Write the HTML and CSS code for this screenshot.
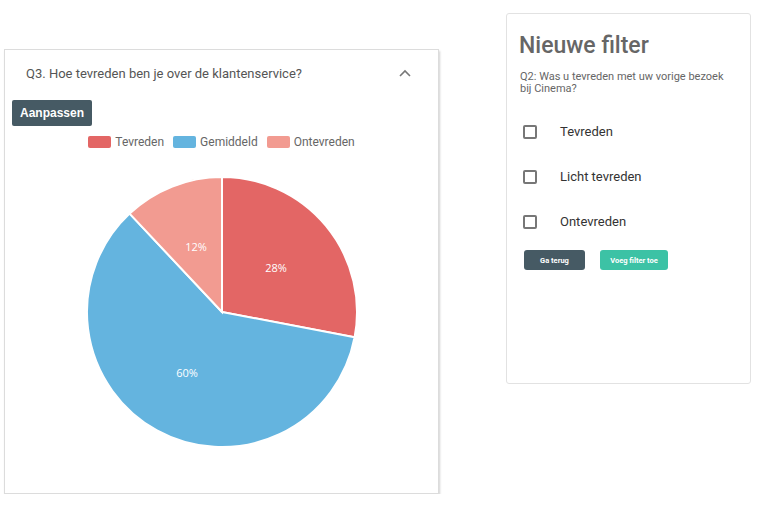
FILE: index.html
```html
<!DOCTYPE html>
<html lang="nl">
<head>
<meta charset="utf-8">
<title>Filter</title>
<link rel="stylesheet" href="styles.css">
</head>
<body>
<div class="page">
  <section class="chart-card">
    <header class="chart-head">
      <span class="chart-title">Q3. Hoe tevreden ben je over de klantenservice?</span>
      <svg class="chevron" width="12" height="8" viewBox="0 0 12 8"><path d="M1 7 L6 2 L11 7" fill="none" stroke="#777" stroke-width="1.6"/></svg>
    </header>
    <button class="btn-edit">Aanpassen</button>
    <ul class="legend">
      <li><span class="swatch sw-red"></span>Tevreden</li>
      <li><span class="swatch sw-blue"></span>Gemiddeld</li>
      <li><span class="swatch sw-pink"></span>Ontevreden</li>
    </ul>
    <div class="pie-wrap">
      <svg class="pie" width="274" height="274" viewBox="0 0 274 274">
        <path d="M137 137 L137 2 A135 135 0 0 1 269.6 162.3 Z" fill="#e36665" stroke="#fff" stroke-width="2"/>
        <path d="M137 137 L269.6 162.3 A135 135 0 1 1 44.6 38.6 Z" fill="#64b4df" stroke="#fff" stroke-width="2"/>
        <path d="M137 137 L44.6 38.6 A135 135 0 0 1 137 2 Z" fill="#f29b91" stroke="#fff" stroke-width="2"/>
        <text x="191" y="92" class="pct">28%</text>
        <text x="102" y="197" class="pct">60%</text>
        <text x="111" y="71" class="pct">12%</text>
      </svg>
    </div>
  </section>

  <section class="filter-card">
    <h1 class="filter-title">Nieuwe filter</h1>
    <p class="filter-q">Q2: Was u tevreden met uw vorige bezoek bij Cinema?</p>
    <ul class="options">
      <li><span class="box"></span>Tevreden</li>
      <li><span class="box"></span>Licht tevreden</li>
      <li><span class="box"></span>Ontevreden</li>
    </ul>
    <div class="actions">
      <button class="btn-small btn-dark">Ga terug</button>
      <button class="btn-small btn-teal">Voeg filter toe</button>
    </div>
  </section>
</div>
</body>
</html>
```

FILE: styles.css
```css
* { box-sizing: border-box; }
html, body { margin: 0; padding: 0; background: #fff; }
body { font-family: Roboto, "Noto Sans", sans-serif; }

.page {
  display: flex;
  align-items: flex-start;
  padding: 13px 0 0 4px;
}

.chart-card {
  width: 435px;
  height: 445px;
  margin-top: 36px;
  border: 1px solid #dcdcdc;
  box-shadow: 1px 2px 2px rgba(0,0,0,0.18);
  background: #fff;
  display: flex;
  flex-direction: column;
}

.chart-head {
  display: flex;
  align-items: center;
  justify-content: space-between;
  height: 46px;
  padding: 0 27px 0 21px;
}
.chart-title { font-size: 13px; color: #555; }
.chevron { display: block; }

.btn-edit {
  align-self: flex-start;
  margin: 4px 0 0 7px;
  width: 80px;
  height: 26px;
  border: 0;
  border-radius: 2px;
  background: #465a64;
  color: #fff;
  font-family: "Liberation Sans", Arial, sans-serif;
  font-weight: bold;
  font-size: 12px;
  padding: 0;
}

.legend {
  list-style: none;
  margin: 9px 0 0;
  padding: 0;
  display: flex;
  justify-content: center;
  gap: 9px;
  font-size: 12px;
  color: #666;
  line-height: 14px;
}
.legend li { display: flex; align-items: center; }
.swatch {
  width: 23px;
  height: 12px;
  border-radius: 2px;
  margin-right: 4px;
}
.sw-red { background: #e36665; }
.sw-blue { background: #64b4df; }
.sw-pink { background: #f29b91; }

.pie-wrap {
  display: flex;
  justify-content: center;
  margin-top: 26px;
}
.pie { display: block; }
.pct {
  fill: #fff;
  font-family: "Open Sans", sans-serif;
  font-size: 11px;
  text-anchor: middle;
  dominant-baseline: central;
}

.filter-card {
  margin-left: 67px;
  width: 245px;
  height: 371px;
  border: 1px solid #e2e2e2;
  border-radius: 3px;
  background: #fff;
  padding: 18px 12px 0 12px;
}

.filter-title {
  margin: 0;
  font-size: 23px;
  font-weight: 500;
  color: #666;
  line-height: 28px;
}
.filter-q {
  margin: 11px 0 0;
  padding-left: 1px;
  font-size: 11px;
  line-height: 12px;
  color: #666;
  padding-right: 8px;
}

.options {
  list-style: none;
  margin: 29px 0 0;
  padding: 0;
  display: flex;
  flex-direction: column;
  gap: 30px;
}
.options li {
  display: flex;
  align-items: center;
  height: 15px;
  font-size: 13px;
  color: #333;
}
.box {
  width: 14px;
  height: 14px;
  border: 2px solid #777;
  border-radius: 2px;
  margin: 0 23px 0 4px;
}

.actions {
  display: flex;
  gap: 15px;
  margin: 21px 0 0 5px;
}
.btn-small {
  height: 20px;
  border: 0;
  border-radius: 3px;
  color: #fff;
  font-family: Roboto, sans-serif;
  font-weight: bold;
  font-size: 7.5px;
  padding: 0;
}
.btn-dark { width: 61px; background: #465a64; }
.btn-teal { width: 68px; background: #3cc2a5; }
```
